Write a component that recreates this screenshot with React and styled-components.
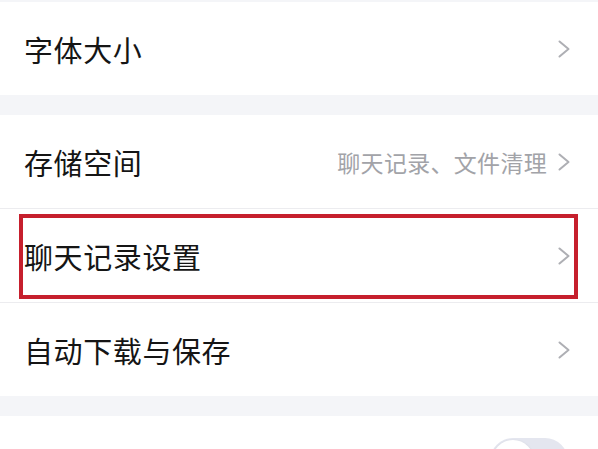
import React from "react";
import styled, { createGlobalStyle } from "styled-components";

const GlobalStyle = createGlobalStyle`
  html, body {
    margin: 0;
    padding: 0;
    background: #f4f5f8;
    font-family: "Noto Sans CJK SC", "Noto Sans", sans-serif;
  }
`;

const Page = styled.div`
  padding-top: 2px;
  display: flex;
  flex-direction: column;
  gap: 20px;
  height: 449px;
  overflow: hidden;
`;

const Group = styled.div`
  background: #fff;
`;

const Row = styled.div`
  position: relative;
  height: 93px;
  display: flex;
  align-items: center;
  padding: 0 28px 0 24px;
  box-sizing: border-box;
  &:not(:last-child) {
    height: 94px;
    border-bottom: 1px solid #ececef;
  }
`;

const Label = styled.span`
  flex: 1;
  font-size: 29px;
  color: #151515;
  letter-spacing: 0.6px;
`;

const Detail = styled.span`
  font-size: 23px;
  color: #a2a3a8;
  margin-right: 11px;
  letter-spacing: 0.3px;
`;

const Highlight = styled.div`
  position: absolute;
  top: 5px;
  bottom: 3px;
  left: 19px;
  right: 20px;
  border: 4px solid #c61f2d;
  pointer-events: none;
`;

const Track = styled.div`
  width: 78px;
  height: 46px;
  border-radius: 23px;
  background: #e4e6ef;
  display: flex;
  align-items: center;
  padding: 0 2px;
  box-sizing: border-box;
  margin: -4px 2px 0 auto;
`;

const Knob = styled.div`
  width: 42px;
  height: 42px;
  border-radius: 50%;
  background: #fff;
  box-shadow: 0 1px 3px rgba(0, 0, 0, 0.12);
`;

const Chevron = () => (
  <svg width="12" height="18" viewBox="0 0 12 18">
    <polyline
      points="1.5,1.5 10.5,9 1.5,16.5"
      fill="none"
      stroke="#aeafb4"
      strokeWidth="2"
      strokeLinecap="round"
      strokeLinejoin="round"
    />
  </svg>
);

const Toggle = () => (
  <Track>
    <Knob />
  </Track>
);

export default function App() {
  return (
    <>
      <GlobalStyle />
      <Page>
        <Group>
          <Row>
            <Label>字体大小</Label>
            <Chevron />
          </Row>
        </Group>
        <Group>
          <Row>
            <Label>存储空间</Label>
            <Detail>聊天记录、文件清理</Detail>
            <Chevron />
          </Row>
          <Row>
            <Label>聊天记录设置</Label>
            <Chevron />
            <Highlight />
          </Row>
          <Row>
            <Label>自动下载与保存</Label>
            <Chevron />
          </Row>
        </Group>
        <Group>
          <Row>
            <Toggle />
          </Row>
        </Group>
      </Page>
    </>
  );
}
